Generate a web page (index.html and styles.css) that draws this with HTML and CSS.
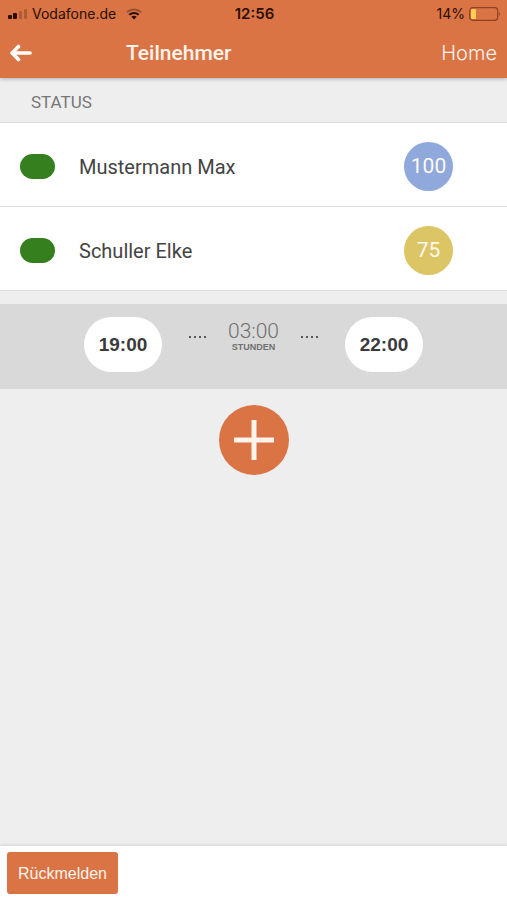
FILE: index.html
```html
<!DOCTYPE html>
<html lang="de">
<head>
<meta charset="utf-8">
<meta name="viewport" content="width=device-width, initial-scale=1">
<title>Teilnehmer</title>
<link rel="stylesheet" href="styles.css">
</head>
<body>
<header class="top">
  <div class="statusbar">
    <div class="carrier">
      <svg class="signal" width="20" height="12" viewBox="0 0 20 12" aria-hidden="true">
        <rect x="0" y="7" width="4" height="4" rx="1"/>
        <rect x="5" y="5" width="4" height="6" rx="1"/>
        <rect x="11" y="3" width="3" height="8" rx="1" opacity=".25"/>
        <rect x="16" y="1" width="3" height="10" rx="1" opacity=".25"/>
      </svg>
      <span>Vodafone.de</span>
      <svg class="wifi" width="16" height="12" viewBox="0 0 16 12" fill="none" stroke-width="2" aria-hidden="true">
        <path d="M1 4.2C5 .5 11 .5 15 4.2" stroke="#2c0e04" opacity=".35"/>
        <path d="M3.3 6.8C6 4.3 10 4.3 12.7 6.8" stroke="#2c0e04"/>
        <path d="M5.3 8.7Q8 6.6 10.7 8.7L8 11.5Z" fill="#2c0e04"/>
      </svg>
    </div>
    <time class="clock">12:56</time>
    <div class="battery">
      <span>14%</span>
      <svg width="32" height="14" viewBox="0 0 32 14" fill="none" aria-hidden="true">
        <rect x=".7" y=".7" width="28" height="12.6" rx="3" stroke="#8b4224" stroke-width="1.2"/>
        <rect x="2" y="2" width="5" height="10" rx="1" fill="#ffcf54"/>
        <path d="M30.2 4.8Q32 7 30.2 9.2Z" fill="#8b4224"/>
      </svg>
    </div>
  </div>
  <nav class="navbar">
    <button class="back" type="button" aria-label="Zurück">
      <svg width="22" height="18" viewBox="0 0 22 18" fill="none" stroke="#fff" stroke-width="3.6" stroke-linecap="round" aria-hidden="true">
        <path d="M3 9H20"/>
        <path d="M8.5 2.5L2.3 9L8.5 15.5" stroke-linejoin="miter"/>
      </svg>
    </button>
    <h1 class="title">Teilnehmer</h1>
    <a class="home" href="#">Home</a>
  </nav>
</header>
<main class="content">
  <h2 class="section">STATUS</h2>
  <ul class="people">
    <li class="person">
      <span class="state"></span>
      <span class="name">Mustermann Max</span>
      <span class="score score-blue">100</span>
    </li>
    <li class="person">
      <span class="state"></span>
      <span class="name">Schuller Elke</span>
      <span class="score score-gold">75</span>
    </li>
  </ul>
  <section class="shift">
    <button class="pill" type="button">19:00</button>
    <div class="span">
      <span class="dots"></span>
      <div class="duration">
        <span class="hours">03:00</span>
        <span class="unit">STUNDEN</span>
      </div>
      <span class="dots"></span>
    </div>
    <button class="pill" type="button">22:00</button>
  </section>
  <button class="add" type="button" aria-label="Hinzufügen">
    <svg width="40" height="40" viewBox="0 0 40 40" stroke="#fff3ec" stroke-width="5" aria-hidden="true">
      <path d="M20 0V40M0 20H40"/>
    </svg>
  </button>
</main>
<footer class="bottom">
  <button class="reply" type="button">Rückmelden</button>
</footer>
</body>
</html>
```
FILE: styles.css
```css
* {
  box-sizing: border-box;
}

body {
  margin: 0;
  min-height: 100vh;
  display: flex;
  flex-direction: column;
  background: #eeeeee;
  color: #444444;
  font-family: Roboto, sans-serif;
}

button {
  border: 0;
  padding: 0;
  font: inherit;
  color: inherit;
  background: none;
}

svg {
  display: block;
}

.top {
  background: #da7445;
  box-shadow: 0 1px 4px rgba(0, 0, 0, 0.25);
}

.statusbar {
  display: grid;
  grid-template-columns: 1fr auto 1fr;
  align-items: center;
  height: 28px;
  padding: 0 6px 0 8px;
  color: #2c0e04;
  font: 14px/28px Inter, sans-serif;
}

.carrier,
.battery {
  display: flex;
  align-items: center;
  gap: 4px;
}

.wifi {
  margin-left: 6px;
}

.signal {
  fill: #2c0e04;
}

.clock {
  font-size: 15px;
  font-weight: 600;
}

.battery {
  justify-content: flex-end;
}

.navbar {
  display: flex;
  align-items: center;
  height: 50px;
  padding: 0 10px;
  color: #fff3ec;
}

.back {
  width: 116px;
}

.title {
  flex: 1;
  margin: 0;
  font-size: 21px;
  font-weight: 500;
}

.home {
  color: inherit;
  font: 300 20px Inter, sans-serif;
  text-decoration: none;
}

.content {
  flex: 1;
}

.section {
  margin: 0;
  padding: 5px 31px 0;
  border-bottom: 1px solid #dddddd;
  color: #777777;
  font-size: 17px;
  font-weight: 400;
  line-height: 39px;
}

.people {
  margin: 0;
  padding: 0;
  list-style: none;
  background: #ffffff;
}

.person {
  display: flex;
  align-items: center;
  height: 84px;
  padding: 4px 54px 0 20px;
  border-bottom: 1px solid #dddddd;
}

.state {
  width: 35px;
  height: 25px;
  border-radius: 13px;
  background: #367f1f;
}

.name {
  flex: 1;
  margin-left: 24px;
  font-size: 20px;
}

.score {
  width: 49px;
  border-radius: 50%;
  color: #fff9ee;
  font-size: 21px;
  line-height: 49px;
  text-align: center;
}

.score-blue {
  background: #8fa9dc;
}

.score-gold {
  background: #dcc565;
}

.shift {
  display: flex;
  justify-content: center;
  align-items: flex-start;
  gap: 27px;
  margin-top: 13px;
  padding: 13px 0 17px;
  background: #d9d9d9;
}

.pill {
  width: 78px;
  height: 55px;
  border-radius: 28px;
  background: #ffffff;
  color: #3b3b3b;
  font: 700 19px "Liberation Sans", sans-serif;
}

.span {
  display: flex;
  align-items: flex-start;
  gap: 22px;
  padding-top: 3px;
}

.dots {
  width: 17px;
  height: 2px;
  margin-top: 16px;
  background: repeating-linear-gradient(to right, #555555 0 2px, transparent 2px 5px);
}

.duration {
  display: flex;
  flex-direction: column;
  align-items: center;
  color: #707070;
}

.hours {
  font-size: 21px;
  font-weight: 300;
  line-height: 22px;
}

.unit {
  font: 700 9px/10px "Liberation Sans", sans-serif;
}

.add {
  display: flex;
  align-items: center;
  justify-content: center;
  width: 70px;
  height: 70px;
  margin: 16px auto;
  border-radius: 50%;
  background: #da7445;
}

.bottom {
  padding: 6px 7px;
  background: #ffffff;
  box-shadow: 0 -1px 3px rgba(0, 0, 0, 0.12);
}

.reply {
  display: block;
  height: 42px;
  padding: 2px 11px 0;
  border-radius: 3px;
  background: #da7445;
  color: #fff3ec;
  font: 16px "Liberation Sans", sans-serif;
}
```
